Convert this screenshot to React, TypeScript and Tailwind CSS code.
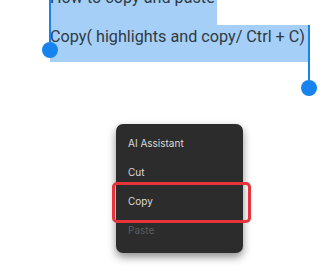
function Handle({ className }: { className: string }) {
  return (
    <svg className={className} width="18" height="20" viewBox="0 0 18 20">
      <circle cx="9" cy="11" r="8" fill="#1683ef" />
    </svg>
  )
}

export default function App() {
  const items = [
    { label: "AI Assistant", muted: false, picked: false },
    { label: "Cut", muted: false, picked: false },
    { label: "Copy", muted: false, picked: true },
    { label: "Paste", muted: true, picked: false },
  ]

  return (
    <div className="w-[324px] h-[271px] bg-white overflow-hidden flex flex-col" style={{ fontFamily: "Roboto, sans-serif" }}>
      {/* selected text */}
      <div className="relative flex flex-col pl-[50px] -mt-[20px] text-[16.2px] leading-[20px] text-[#2e3a44]">
        <div className="w-[167px] h-[45px] pt-[8px] bg-[#a5cff6] whitespace-nowrap">How to copy and paste</div>
        <div className="w-[259px] h-[37px] pt-[2px] bg-[#a5cff6] whitespace-nowrap">Copy( highlights and copy/ Ctrl + C)</div>

        {/* start handle */}
        <div className="absolute left-[49px] top-0 w-[2px] h-[62px] bg-[#1683ef]" />
        <Handle className="absolute left-[41px] top-[59px]" />
        {/* end handle */}
        <div className="absolute left-[308px] top-[45px] w-[2px] h-[55px] bg-[#1683ef]" />
        <Handle className="absolute left-[300px] top-[97px]" />
      </div>

      {/* context menu */}
      <div className="flex pt-[62px] pl-[116px]">
        <div className="flex flex-col w-[127px] h-[129px] pt-[5px] rounded-[7px] bg-[#2c2c2c] shadow-[0_4px_8px_rgba(0,0,0,0.45)]" style={{ fontFamily: "Inter, sans-serif" }}>
          {items.map((it) => (
            <div
              key={it.label}
              className={`relative h-[29px] pl-[12px] text-[10px] leading-[29px] ${it.muted ? "text-[#5c5c5c]" : "text-[#dadada]"}`}
            >
              {it.label}
              {it.picked && (
                <div className="absolute -left-[4px] -top-[5px] -right-[8px] -bottom-[7px] border-[3px] border-[#e6343a] rounded-[5px]" />
              )}
            </div>
          ))}
        </div>
      </div>
    </div>
  )
}
